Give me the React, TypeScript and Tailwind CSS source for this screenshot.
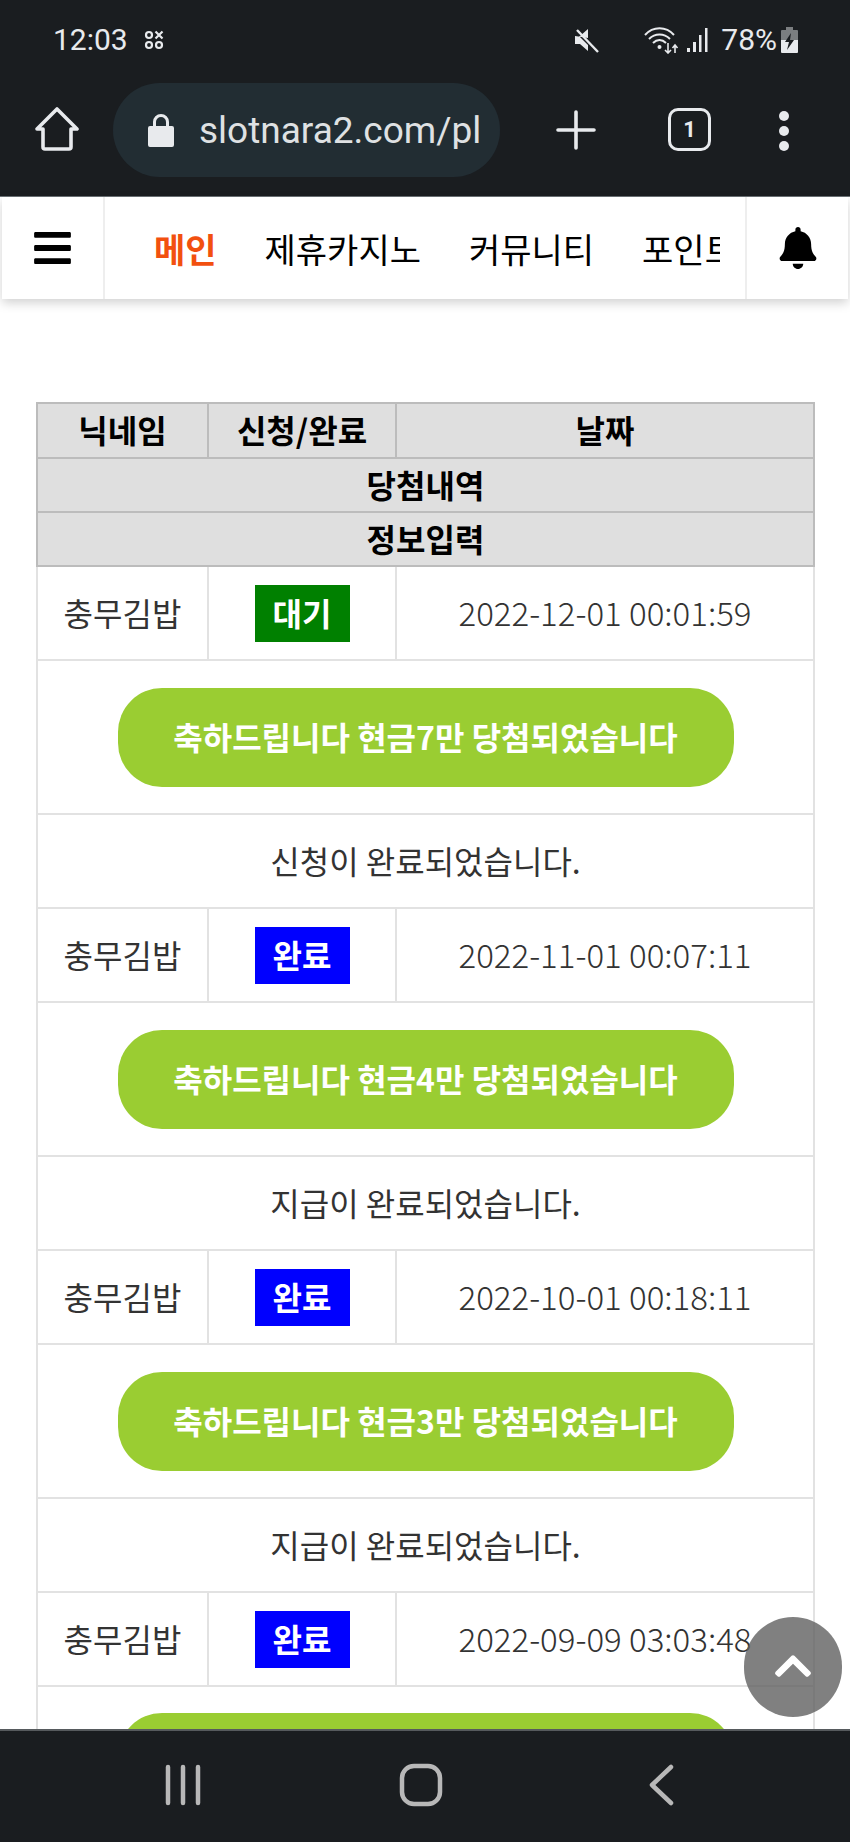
import { FaBars, FaBell, FaChevronUp } from "react-icons/fa"

const entries = [
  { date: "2022-12-01 00:01:59", status: "대기", prize: "7만", message: "신청이 완료되었습니다." },
  { date: "2022-11-01 00:07:11", status: "완료", prize: "4만", message: "지급이 완료되었습니다." },
  { date: "2022-10-01 00:18:11", status: "완료", prize: "3만", message: "지급이 완료되었습니다." },
]

function StatusBar() {
  return (
    <div className="flex h-[80px] items-center pl-[53px] pr-[52px] text-[#e8eaed]">
      <span className="font-['Roboto',sans-serif] text-[30px] leading-none">12:03</span>
      <svg className="ml-[16px]" width="20" height="20" viewBox="0 0 20 20" fill="none" stroke="currentColor" strokeWidth="2.2">
        <circle cx="5" cy="5" r="3" />
        <circle cx="5" cy="15" r="3" />
        <circle cx="15" cy="15" r="3" />
        <path d="M11.5 1.5l7 7M18.5 1.5l-7 7" />
      </svg>
      <svg className="ml-auto" width="26" height="26" viewBox="0 0 26 26" fill="currentColor">
        <path d="M1 9h5l8-7v9zM1 9v8h5l8 7v-6L5 9z" />
        <path d="M3 3l21 22" stroke="currentColor" strokeWidth="2.4" />
      </svg>
      <svg className="ml-[44px]" width="36" height="28" viewBox="0 0 36 28" fill="none" stroke="currentColor" strokeWidth="2">
        <path d="M1 9c8-9 21-9 29 0M5 13c6-6 15-6 21 0M9 17c4-4 9-4 13 0" />
        <circle cx="15.5" cy="21" r="2" fill="currentColor" stroke="none" />
        <path d="M24 17v10M21 24l3 3 3-3M31 27V19M28.500 22l2.500-3 2.500 3" strokeWidth="1.600" />
      </svg>
      <svg className="ml-[7px]" width="22" height="26" viewBox="0 0 22 26" fill="currentColor">
        <rect x="0" y="21" width="3" height="4" />
        <rect x="6" y="15" width="3" height="10" />
        <rect x="12" y="8" width="2.500" height="17" />
        <rect x="18" y="1" width="2.500" height="24" />
      </svg>
      <span className="ml-[12px] font-['Roboto',sans-serif] text-[30px] leading-none">78%</span>
      <svg className="ml-[4px]" width="17" height="26" viewBox="0 0 17 26">
        <path d="M5 0h7v3h4a1 1 0 0 1 1 1v9H0V4a1 1 0 0 1 1-1h4z" fill="#7b7e80" />
        <path d="M0 13h17v12a1 1 0 0 1-1 1H1a1 1 0 0 1-1-1z" fill="#e8eaed" />
        <path d="M10 6l-6 9h4l-2 8 7-10H9z" fill="#1a1d20" />
      </svg>
    </div>
  )
}

function Toolbar() {
  return (
    <div className="flex h-[117px] items-start border-b border-[#6b7276] pt-[3px] text-[#e8eaed]">
      <div className="flex w-[113px] shrink-0 justify-center pt-[24px] pl-[1px]">
        <svg width="44" height="44" viewBox="0 0 44 44" fill="none" stroke="currentColor" strokeWidth="3.600" strokeLinejoin="round" strokeLinecap="round">
          <path d="M2 22L22 2l20 20h-6v18a2 2 0 0 1-2 2H10a2 2 0 0 1-2-2V22z" />
        </svg>
      </div>
      <div className="flex h-[94px] w-[387px] shrink-0 items-center overflow-hidden rounded-full bg-[#222d33] pl-[35px]">
        <svg className="shrink-0" width="26" height="34" viewBox="0 0 26 34" fill="currentColor">
          <path d="M2 13h3V9a8 8 0 0 1 16 0v4h3a2 2 0 0 1 2 2v17a2 2 0 0 1-2 2H2a2 2 0 0 1-2-2V15a2 2 0 0 1 2-2zm6 0h10V9a5 5 0 0 0-10 0z" />
        </svg>
        <div className="ml-[25px] w-[283px] shrink-0 overflow-hidden">
          <span className="whitespace-nowrap font-['Roboto',sans-serif] text-[37px] leading-none text-[#dfe1e3]">slotnara2.com/play</span>
        </div>
      </div>
      <div className="flex w-[138px] shrink-0 justify-center pt-[27px] pl-[14px]">
        <svg width="40" height="40" viewBox="0 0 40 40" stroke="currentColor" strokeWidth="3.600" strokeLinecap="round">
          <path d="M20 2v36M2 20h36" />
        </svg>
      </div>
      <div className="ml-[30px] mt-[25px] flex h-[43px] w-[43px] items-center justify-center rounded-[10px] border-[3.500px] border-[#e8eaed] font-['Roboto',sans-serif] text-[22px] font-bold leading-none">
        1
      </div>
      <div className="ml-[68px] mt-[28px] flex flex-col gap-[5px]">
        <span className="h-[10px] w-[10px] rounded-full bg-[#e8eaed]" />
        <span className="h-[10px] w-[10px] rounded-full bg-[#e8eaed]" />
        <span className="h-[10px] w-[10px] rounded-full bg-[#e8eaed]" />
      </div>
    </div>
  )
}

function NavBar() {
  return (
    <div className="relative z-10 mx-[2px] flex h-[102px] shrink-0 items-center bg-white text-[34px] text-black shadow-[0_4px_10px_rgba(0,0,0,0.18)]">
      <div className="flex h-full w-[103px] shrink-0 items-center justify-center border-r-2 border-[#eeeeee] pr-[1px]">
        <FaBars className="h-[42px] w-[37px]" />
      </div>
      <div className="ml-[49px] flex w-[566px] shrink-0 gap-[48px] overflow-hidden whitespace-nowrap">
        <span className="font-bold text-[#f2500f]">메인</span>
        <span>제휴카지노</span>
        <span>커뮤니티</span>
        <span>포인트</span>
      </div>
      <div className="ml-auto flex h-full w-[103px] shrink-0 items-center justify-center border-l-2 border-[#eeeeee]">
        <FaBell className="h-[42px] w-[40px]" />
      </div>
    </div>
  )
}

function HeadCell({ children, span }: { children: string; span?: number }) {
  return (
    <th colSpan={span} className="border-2 border-[#bcbcbc] bg-[#dfdfdf] p-0 pb-[3px] text-center text-[32px] font-bold leading-none text-black">
      {children}
    </th>
  )
}

function Badge({ status }: { status: string }) {
  const color = status === "대기" ? "bg-[#008000]" : "bg-[#0000ff]"
  return (
    <div className={`mx-auto flex h-[57px] w-[95px] items-center justify-center pb-[2px] text-[32px] font-bold leading-none text-white ${color}`}>
      {status}
    </div>
  )
}

function InfoRow({ date, status }: { date: string; status: string }) {
  return (
    <tr>
      <td className="h-[94px] border-2 border-[#e2e2e2] p-0 pb-[2px] text-center text-[#333333]">충무김밥</td>
      <td className="border-2 border-[#e2e2e2] p-0 align-middle">
        <Badge status={status} />
      </td>
      <td className="border-2 border-[#e2e2e2] p-0 pb-[2px] text-center text-[33px] font-light text-[#333333]">{date}</td>
    </tr>
  )
}

function PrizeButton({ prize }: { prize: string }) {
  return (
    <div className="mx-auto flex h-[99px] w-[616px] items-center justify-center rounded-[44px] bg-[#9acd32] pb-[2px] text-[32px] font-bold leading-none text-white">
      축하드립니다 현금{prize} 당첨되었습니다
    </div>
  )
}

function Entry({ date, status, prize, message }: { date: string; status: string; prize: string; message: string }) {
  return (
    <>
      <InfoRow date={date} status={status} />
      <tr>
        <td colSpan={3} className="h-[154px] border-2 border-[#e2e2e2] p-0">
          <PrizeButton prize={prize} />
        </td>
      </tr>
      <tr>
        <td colSpan={3} className="h-[94px] border-2 border-[#e2e2e2] p-0 pb-[2px] text-center text-[#333333]">
          {message}
        </td>
      </tr>
    </>
  )
}

export default function App() {
  return (
    <div className="flex h-[1842px] w-[850px] flex-col overflow-hidden bg-white font-['Noto_Sans_CJK_KR','Noto_Sans',sans-serif]">
      <div className="shrink-0 bg-[#1a1d20]">
        <StatusBar />
        <Toolbar />
      </div>
      <NavBar />

      <main className="relative min-h-0 flex-1 overflow-hidden px-[36px] pt-[103px]">
        <table className="w-[779px] table-fixed border-collapse text-[32px] leading-none">
          <colgroup>
            <col className="w-[171px]" />
            <col className="w-[188px]" />
            <col />
          </colgroup>
          <thead>
            <tr className="h-[55px]">
              <HeadCell>닉네임</HeadCell>
              <HeadCell>신청/완료</HeadCell>
              <HeadCell>날짜</HeadCell>
            </tr>
            <tr className="h-[54px]">
              <HeadCell span={3}>당첨내역</HeadCell>
            </tr>
            <tr className="h-[54px]">
              <HeadCell span={3}>정보입력</HeadCell>
            </tr>
          </thead>
          <tbody>
            {entries.map((entry) => (
              <Entry key={entry.date} {...entry} />
            ))}
            <InfoRow date="2022-09-09 03:03:48" status="완료" />
            <tr>
              <td colSpan={3} className="border-2 border-[#e2e2e2] px-0 py-[26px]">
                <PrizeButton prize="5만" />
              </td>
            </tr>
          </tbody>
        </table>

        <button className="absolute bottom-[12px] left-[744px] flex h-[100px] w-[98px] items-center justify-center rounded-full bg-[rgba(96,96,96,0.8)] pb-[2px] text-white">
          <FaChevronUp className="h-[42px] w-[42px]" />
        </button>
      </main>

      <div className="flex h-[113px] shrink-0 border-t-2 border-[#565a5d] bg-[#1a1d20] text-[#b8b8b8]">
        <svg className="ml-[164px] mt-[33px]" width="38" height="42" viewBox="0 0 38 42" stroke="currentColor" strokeWidth="4.500" strokeLinecap="round">
          <path d="M4 3v36M19 3v36M34 3v36" />
        </svg>
        <svg className="ml-[197px] mt-[32px]" width="44" height="44" viewBox="0 0 44 44" fill="none" stroke="currentColor" strokeWidth="4.500">
          <rect x="3" y="3" width="38" height="38" rx="12" />
        </svg>
        <svg className="ml-[205px] mt-[33px]" width="26" height="42" viewBox="0 0 26 42" fill="none" stroke="currentColor" strokeWidth="4.500" strokeLinecap="round" strokeLinejoin="round">
          <path d="M23 3L4 21l19 18" />
        </svg>
      </div>
    </div>
  )
}
